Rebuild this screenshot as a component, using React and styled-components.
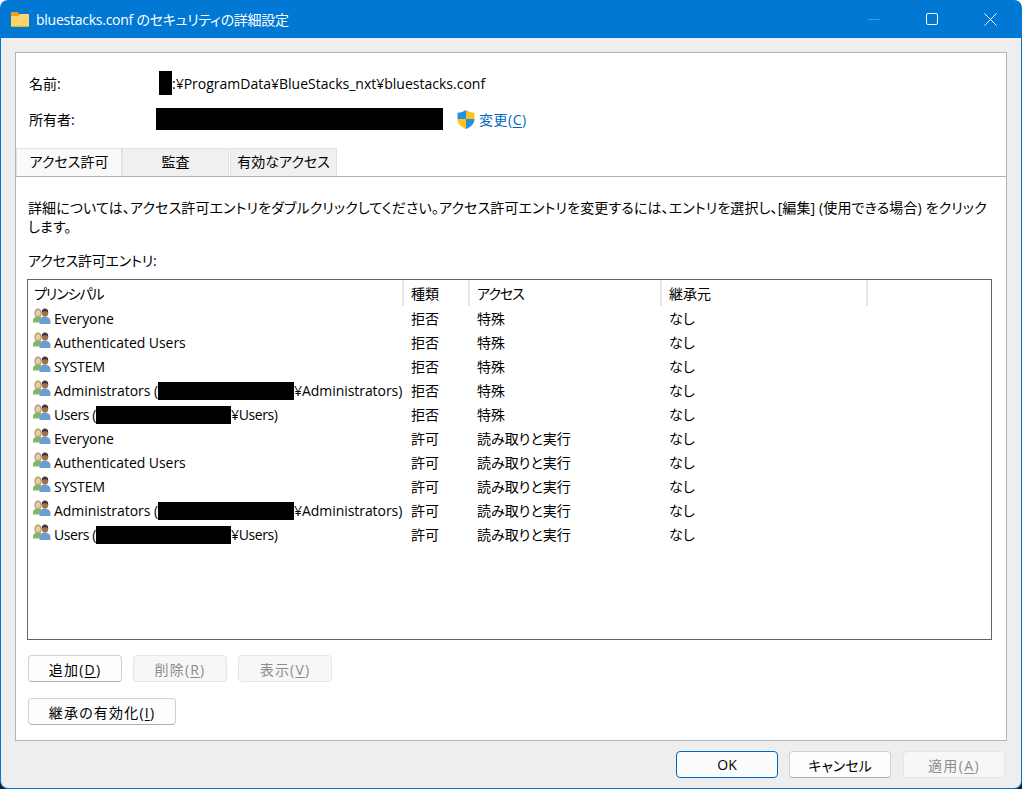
import styled, { createGlobalStyle } from 'styled-components';

const rows = [
    { name: 'Everyone', type: '拒否', access: '特殊' },
    { name: 'Authenticated Users', type: '拒否', access: '特殊' },
    { name: 'SYSTEM', type: '拒否', access: '特殊' },
    { name: 'Administrators (', hidden: 136, rest: '¥Administrators)', type: '拒否', access: '特殊' },
    { name: 'Users (', hidden: 135, rest: '¥Users)', tight: true, type: '拒否', access: '特殊' },
    { name: 'Everyone', type: '許可', access: '読み取りと実行' },
    { name: 'Authenticated Users', type: '許可', access: '読み取りと実行' },
    { name: 'SYSTEM', type: '許可', access: '読み取りと実行' },
    { name: 'Administrators (', hidden: 136, rest: '¥Administrators)', type: '許可', access: '読み取りと実行' },
    { name: 'Users (', hidden: 135, rest: '¥Users)', tight: true, type: '許可', access: '読み取りと実行' },
];

function FolderIcon() {
    return <svg width="18" height="15" viewBox="0 0 18 15">
        <path d="M0 1C0 .4.4 0 1 0h5.500l2 2H17c.6 0 1 .4 1 1v3H0z" fill="#e8a419" />
        <path d="M0 5c0-.6.4-1 1-1h6.500l2-2H17c.6 0 1 .4 1 1v11c0 .6-.4 1-1 1H1c-.6 0-1-.4-1-1z" fill="#fdd66f" />
        <path d="M0 13.800h18V14c0 .6-.4 1-1 1H1c-.6 0-1-.4-1-1z" fill="#eeb02f" />
    </svg>
}

function ShieldIcon() {
    return <svg width="18" height="19" viewBox="0 0 18 19">
        <path d="M9 0C6.500 1.700 3.500 2.500.5 2.700V9H9z" fill="#2492e0" />
        <path d="M9 0c2.500 1.700 5.500 2.500 8.500 2.700V9H9z" fill="#fcc31e" />
        <path d="M.5 9c0 4.700 3.500 8 8.500 10V9z" fill="#fcc31e" />
        <path d="M17.500 9c0 4.700-3.500 8-8.500 10V9z" fill="#2492e0" />
    </svg>
}

function UsersIcon() {
    return <svg width="18" height="16" viewBox="0 0 18 16">
        <path d="M0 13c0-3 1.800-5 5-5s5 2 5 5v1.500H0z" fill="#84b56c" />
        <path d="M1.500 5c0-3 1.500-4.500 3.500-4.500S8.500 2 8.500 5c0 1.500-.5 3-.5 3H2s-.5-1.500-.5-3z" fill="#b3976a" />
        <ellipse cx="5" cy="5" rx="2.500" ry="3" fill="#e6cda6" />
        <path d="M6.500 16v-2.500c0-3 2.200-4.800 5.500-4.800s5.500 1.800 5.500 4.800V16z" fill="#6b9fd4" />
        <ellipse cx="12" cy="5" rx="3.200" ry="3.700" fill="#a3704a" />
        <path d="M8.800 5c-.4-3 1.200-4.500 3.200-4.500S15.600 2 15.200 5c-.5-1.300-1.500-1.800-3.200-1.800S9.300 3.700 8.800 5z" fill="#3a3634" />
    </svg>
}

function App() {
    return <Page>
        <GlobalStyle />
        <Window>
            <TitleBar>
                <FolderIcon />
                <Title>bluestacks.conf のセキュリティの詳細設定</Title>
                <Controls>
                    <Control>
                        <svg width="12" height="12" viewBox="0 0 12 12"><path d="M0 6.500h12" stroke="#3f99de" /></svg>
                    </Control>
                    <Control>
                        <svg width="12" height="12" viewBox="0 0 12 12"><rect x=".5" y=".5" width="11" height="11" rx="1.500" fill="none" stroke="#fff" /></svg>
                    </Control>
                    <Control>
                        <svg width="13" height="13" viewBox="0 0 13 13"><path d="M.5.5l12 12M12.500.5l-12 12" stroke="#fff" /></svg>
                    </Control>
                </Controls>
            </TitleBar>
            <Body>
                <Panel>
                    <InfoRow>
                        <InfoLabel>名前:</InfoLabel>
                        <Hidden $width={13} $height={24} />
                        <span>:¥ProgramData¥BlueStacks_nxt¥bluestacks.conf</span>
                    </InfoRow>
                    <OwnerRow>
                        <OwnerLabel>所有者:</OwnerLabel>
                        <Hidden $width={287} $height={22} />
                        <ChangeLink><ShieldIcon /><ChangeText>変更(<Key>C</Key>)</ChangeText></ChangeLink>
                    </OwnerRow>
                    <Tabs>
                        <Tab $active>アクセス許可</Tab>
                        <Tab>監査</Tab>
                        <Tab>有効なアクセス</Tab>
                    </Tabs>
                    <Content>
                        <Intro>詳細については、アクセス許可エントリをダブルクリックしてください。アクセス許可エントリを変更するには、エントリを選択し、[編集] (使用できる場合) をクリックします。</Intro>
                        <ListLabel>アクセス許可エントリ:</ListLabel>
                        <List>
                            <HeaderRow>
                                <HeadCell $tight>プリンシパル</HeadCell>
                                <HeadCell>種類</HeadCell>
                                <HeadCell $tight>アクセス</HeadCell>
                                <HeadCell>継承元</HeadCell>
                            </HeaderRow>
                            {rows.map((row, i) => <Row key={i}>
                                <NameCell>
                                    <UsersIcon />
                                    <Name $tight={row.tight}>
                                        {row.name}
                                        {row.hidden && <Hidden $width={row.hidden} $height={18} $inline />}
                                        {row.rest}
                                    </Name>
                                </NameCell>
                                <Cell>{row.type}</Cell>
                                <Cell>{row.access}</Cell>
                                <Cell>なし</Cell>
                            </Row>)}
                        </List>
                        <ButtonRow>
                            <Button>追加(<Key>D</Key>)</Button>
                            <Button disabled>削除(<Key>R</Key>)</Button>
                            <Button disabled>表示(<Key>V</Key>)</Button>
                        </ButtonRow>
                        <WideButton>継承の有効化(<Key>I</Key>)</WideButton>
                    </Content>
                </Panel>
                <Footer>
                    <FooterButton $primary>OK</FooterButton>
                    <FooterButton>キャンセル</FooterButton>
                    <ApplyButton disabled>適用(<Key>A</Key>)</ApplyButton>
                </Footer>
            </Body>
        </Window>
    </Page>
}
export default App

const GlobalStyle = createGlobalStyle`
    html, body {
        margin: 0;
        padding: 0;
    }
    body {
        font-family: "Open Sans", "Noto Sans CJK JP", sans-serif;
        font-size: 14px;
        font-feature-settings: "palt";
        color: #000;
    }
`

const Page = styled.div`
    width: 1022px;
    height: 789px;
    overflow: hidden;
    background: linear-gradient(#fff 0 50%, #1c1c1c 50% 100%);
`

const Window = styled.div`
    height: 789px;
    box-sizing: border-box;
    display: flex;
    flex-direction: column;
    border-radius: 8px;
    overflow: hidden;
    background-color: #0078d4;
`

const TitleBar = styled.div`
    height: 38px;
    flex: none;
    display: flex;
    align-items: center;
    padding-left: 11px;
    color: #fff;
`

const Title = styled.div`
    margin-left: 7px;
    font-size: 14px;
    letter-spacing: -0.25px;
    white-space: nowrap;
`

const Controls = styled.div`
    margin-left: auto;
    padding-right: 3px;
    display: flex;
    height: 100%;
`

const Control = styled.div`
    width: 58px;
    display: flex;
    align-items: center;
    justify-content: center;
`

const Body = styled.div`
    flex: 1;
    min-height: 0;
    margin: 0 1px 1px;
    padding: 14px 14px 0;
    display: flex;
    flex-direction: column;
    background-color: #eee;
    border-radius: 0 0 7px 7px;
`

const Panel = styled.div`
    flex: 1;
    min-height: 0;
    display: flex;
    flex-direction: column;
    background-color: #fff;
    border: 1px solid #b4b4b4;
`

const InfoRow = styled.div`
    height: 24px;
    margin-top: 18px;
    padding-left: 13px;
    display: flex;
    align-items: center;
    white-space: nowrap;
`

const InfoLabel = styled.div`
    width: 130px;
    flex: none;
`

const OwnerRow = styled(InfoRow)`
    margin-top: 12px;
`

const OwnerLabel = styled(InfoLabel)`
    width: 127px;
`

const Hidden = styled.span`
    display: inline-block;
    flex: none;
    vertical-align: ${(props) => props.$inline ? '-4px' : 'middle'};
    width: ${(props) => props.$width}px;
    height: ${(props) => props.$height}px;
    background-color: #000;
`

const ChangeLink = styled.span`
    margin-left: 14px;
    display: flex;
    align-items: center;
    gap: 4px;
    color: #0067c0;
`

const ChangeText = styled.span`
    letter-spacing: 0.5px;
`

const Key = styled.span`
    text-decoration: underline;
    text-underline-offset: 2px;
`

const Tabs = styled.div`
    height: 29px;
    margin-top: 17px;
    flex: none;
    display: flex;
    box-sizing: border-box;
    border-bottom: 1px solid #b4b4b4;
`

const Tab = styled.div`
    width: ${(props) => props.$active ? 106 : 107}px;
    height: 28px;
    padding-bottom: 3px;
    box-sizing: border-box;
    display: flex;
    align-items: center;
    justify-content: center;
    white-space: nowrap;
    border: 1px solid #e2e2e2;
    border-bottom: none;
    margin-right: ${(props) => props.$active ? 0 : 1}px;
    background-color: ${(props) => props.$active ? '#f9f9f9' : '#f0f0f0'};
`

const Content = styled.div`
    flex: 1;
    min-height: 0;
    padding: 21px 14px 0 12px;
    display: flex;
    flex-direction: column;
    align-items: flex-start;
`

const Intro = styled.div`
    line-height: 19px;
    width: 965px;
    letter-spacing: 0.12px;
`

const ListLabel = styled.div`
    margin-top: 15px;
    line-height: 19px;
    letter-spacing: -0.2px;
`

const List = styled.div`
    margin-top: 9px;
    margin-left: -1px;
    width: 965px;
    height: 361px;
    box-sizing: border-box;
    flex: none;
    border: 1px solid #646464;
    background-color: #fff;
    overflow: hidden;
`

const columns = '376px 66px 192px 206px';

const HeaderRow = styled.div`
    height: 26px;
    display: grid;
    grid-template-columns: ${columns};
`

const HeadCell = styled.div`
    display: flex;
    align-items: center;
    padding-left: 7px;
    border-right: 2px solid #e6e6e6;
    white-space: nowrap;
    letter-spacing: ${(props) => props.$tight ? '-1px' : '0'};
    &:first-child {
        padding-left: 6px;
    }
`

const Row = styled.div`
    height: 24px;
    display: grid;
    grid-template-columns: ${columns};
`

const Cell = styled.div`
    display: flex;
    align-items: center;
    padding-left: 7px;
    white-space: nowrap;
`

const NameCell = styled(Cell)`
    padding-left: 5px;
    gap: 3px;
    svg {
        flex: none;
        margin-top: -4px;
    }
`

const Name = styled.span`
    white-space: nowrap;
    letter-spacing: ${(props) => props.$tight ? '-0.4px' : '-0.05px'};
`

const ButtonRow = styled.div`
    margin-top: 15px;
    display: flex;
    gap: 11px;
`

const Button = styled.button`
    width: 94px;
    height: 27px;
    padding: 0;
    box-sizing: border-box;
    font: inherit;
    font-feature-settings: inherit;
    letter-spacing: 1.2px;
    color: #000;
    background-color: #fdfdfd;
    border: 1px solid #d0d0d0;
    border-bottom-color: #aeaeae;
    border-radius: 4px;
    &:disabled {
        color: #8c8c8c;
        background-color: #f7f7f7;
        border-color: #e6e6e6;
    }
`

const WideButton = styled(Button)`
    width: 148px;
    margin-top: 16px;
`

const Footer = styled.div`
    height: 47px;
    flex: none;
    display: flex;
    justify-content: flex-end;
    align-items: center;
    gap: 11px;
    padding-right: 2px;
`

const FooterButton = styled(Button)`
    width: 102px;
    letter-spacing: 0;
    ${(props) => props.$primary && 'border-color: #0067c0; background-color: #fcfcfc;'}
`

const ApplyButton = styled(FooterButton)`
    margin-left: 1px;
    letter-spacing: 1.4px;
`
